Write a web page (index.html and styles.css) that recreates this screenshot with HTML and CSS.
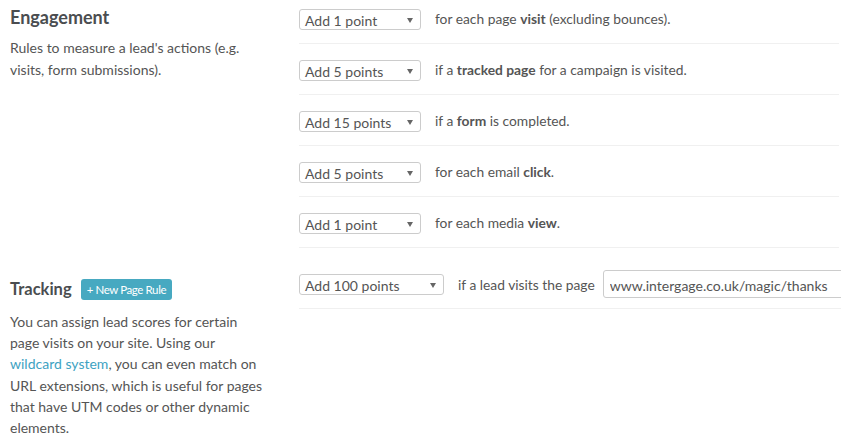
FILE: index.html
```html
<!DOCTYPE html>
<html lang="en">
<head>
    <meta charset="UTF-8">
    <title>Lead Scoring</title>
    <link rel="stylesheet" href="styles.css">
</head>
<body>

    <!-- Engagement rules -->
    <div class="section">
        <div class="section-info">
            <h2>Engagement</h2>
            <p>Rules to measure a lead's actions (e.g. visits, form submissions).</p>
        </div>
        <div class="section-rules">
            <div class="rule">
                <div class="select" style="width: 122px;">
                    <span>Add 1 point</span>
                    <svg width="6" height="5" viewBox="0 0 6 5"><path d="M0 0h6L3 5z" fill="#666"/></svg>
                </div>
                <span class="rule-text">for each page <b>visit</b> (excluding bounces).</span>
            </div>
            <div class="rule">
                <div class="select" style="width: 122px;">
                    <span>Add 5 points</span>
                    <svg width="6" height="5" viewBox="0 0 6 5"><path d="M0 0h6L3 5z" fill="#666"/></svg>
                </div>
                <span class="rule-text">if a <b>tracked page</b> for a campaign is visited.</span>
            </div>
            <div class="rule">
                <div class="select" style="width: 122px;">
                    <span>Add 15 points</span>
                    <svg width="6" height="5" viewBox="0 0 6 5"><path d="M0 0h6L3 5z" fill="#666"/></svg>
                </div>
                <span class="rule-text">if a <b>form</b> is completed.</span>
            </div>
            <div class="rule">
                <div class="select" style="width: 122px;">
                    <span>Add 5 points</span>
                    <svg width="6" height="5" viewBox="0 0 6 5"><path d="M0 0h6L3 5z" fill="#666"/></svg>
                </div>
                <span class="rule-text">for each email <b>click</b>.</span>
            </div>
            <div class="rule">
                <div class="select" style="width: 122px;">
                    <span>Add 1 point</span>
                    <svg width="6" height="5" viewBox="0 0 6 5"><path d="M0 0h6L3 5z" fill="#666"/></svg>
                </div>
                <span class="rule-text">for each media <b>view</b>.</span>
            </div>
        </div>
    </div>

    <!-- Page tracking rules -->
    <div class="section section-tracking">
        <div class="section-info">
            <div class="info-header">
                <h2>Tracking</h2>
                <a href="#" class="btn-new">+ New Page Rule</a>
            </div>
            <p>You can assign lead scores for certain page visits on your site. Using our <a href="#" class="link">wildcard system</a>, you can even match on URL extensions, which is useful for pages that have UTM codes or other dynamic elements.</p>
        </div>
        <div class="section-rules">
            <div class="rule rule-page">
                <div class="select" style="width: 145px;">
                    <span>Add 100 points</span>
                    <svg width="6" height="5" viewBox="0 0 6 5"><path d="M0 0h6L3 5z" fill="#666"/></svg>
                </div>
                <span class="rule-text">if a lead visits the page</span>
                <input type="text" class="page-input" value="www.intergage.co.uk/magic/thanks">
            </div>
        </div>
    </div>

</body>
</html>
```

FILE: styles.css
```css
/* --- Page --- */
body {
    font-family: Lato, "Open Sans", sans-serif;
    font-size: 14px;
    color: #555;
    background-color: #fff;
    margin: 0;
    overflow: hidden;
}

/* --- Two column sections --- */
.section {
    display: flex;
}

.section-info {
    width: 255px;
    padding: 0 34px 0 10px;
    flex: none;
}

.section-info h2 {
    margin: 6px 0 0;
    font-size: 18px;
    line-height: 22px;
    font-weight: 700;
    color: #4a4d50;
}

.section-info p {
    margin: 9px 0 0;
    line-height: 22px;
}

.section-rules {
    width: 540px;
    flex: none;
}

/* --- Rule rows --- */
.rule {
    display: flex;
    align-items: center;
    padding: 16px 0 13px;
    border-bottom: 1px solid #f0f0f0;
}

.rule:first-child {
    padding-top: 9px;
}

.rule-text {
    margin-left: 14px;
    margin-bottom: 2px;
    font-size: 13.8px;
    white-space: nowrap;
}

.rule-text b {
    font-weight: 700;
}

/* Fake select box */
.select {
    display: flex;
    align-items: center;
    justify-content: space-between;
    box-sizing: border-box;
    height: 21px;
    padding: 2px 7px 0 5px;
    border: 1px solid #ccc;
    border-radius: 3px;
    background-color: #fff;
    flex: none;
}

/* --- Tracking section --- */
.section-tracking {
    margin-top: 13px;
}

.info-header {
    display: flex;
    align-items: center;
    margin-top: 17px;
}

.section-tracking .section-info h2 {
    margin: 0;
    font-size: 16.5px;
}

.section-tracking .section-info p {
    margin-top: 11px;
    line-height: 21.2px;
}

.btn-new {
    display: inline-block;
    margin-left: 9px;
    padding: 0 6px;
    height: 21px;
    line-height: 21px;
    font-size: 11.5px;
    letter-spacing: -0.4px;
    color: #fff;
    background-color: #47a9c1;
    border-radius: 3px;
    text-decoration: none;
}

.link {
    color: #3da2c2;
    text-decoration: none;
}

.rule-page {
    width: 580px;
    padding: 10px 0 10px;
}

.rule-page .rule-text {
    margin-right: 8px;
    margin-bottom: 0;
}

.page-input {
    box-sizing: border-box;
    width: 260px;
    height: 28px;
    padding: 2px 6px 0;
    font-family: Lato, "Open Sans", sans-serif;
    font-size: 14px;
    color: #555;
    border: 1px solid #ccc;
    border-radius: 3px;
    flex: none;
}
```
